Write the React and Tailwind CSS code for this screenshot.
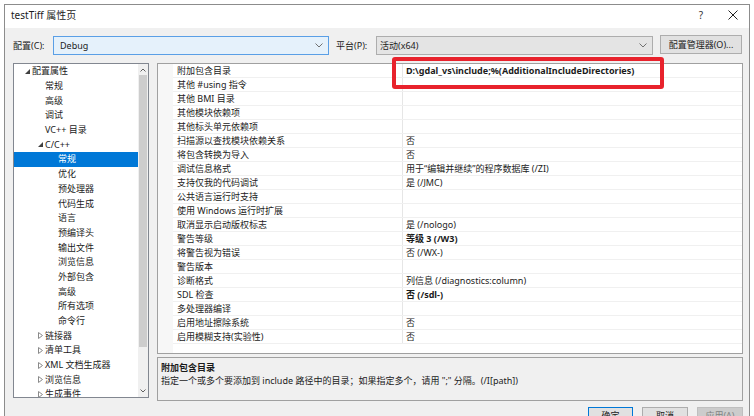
import React from "react";

const tree = [
  { t: "配置属性", l: 0, tri: "open" },
  { t: "常规", l: 1 },
  { t: "高级", l: 1 },
  { t: "调试", l: 1 },
  { t: "VC++ 目录", l: 1 },
  { t: "C/C++", l: 1, tri: "open" },
  { t: "常规", l: 2, sel: true },
  { t: "优化", l: 2 },
  { t: "预处理器", l: 2 },
  { t: "代码生成", l: 2 },
  { t: "语言", l: 2 },
  { t: "预编译头", l: 2 },
  { t: "输出文件", l: 2 },
  { t: "浏览信息", l: 2 },
  { t: "外部包含", l: 2 },
  { t: "高级", l: 2 },
  { t: "所有选项", l: 2 },
  { t: "命令行", l: 2 },
  { t: "链接器", l: 1, tri: "closed" },
  { t: "清单工具", l: 1, tri: "closed" },
  { t: "XML 文档生成器", l: 1, tri: "closed" },
  { t: "浏览信息", l: 1, tri: "closed" },
  { t: "生成事件", l: 1, tri: "closed" },
];

const props = [
  ["附加包含目录", "D:\\gdal_vs\\include;%(AdditionalIncludeDirectories)", true],
  ["其他 #using 指令", ""],
  ["其他 BMI 目录", ""],
  ["其他模块依赖项", ""],
  ["其他标头单元依赖项", ""],
  ["扫描源以查找模块依赖关系", "否"],
  ["将包含转换为导入", "否"],
  ["调试信息格式", "用于“编辑并继续”的程序数据库 (/ZI)"],
  ["支持仅我的代码调试", "是 (/JMC)"],
  ["公共语言运行时支持", ""],
  ["使用 Windows 运行时扩展", ""],
  ["取消显示启动版权标志", "是 (/nologo)"],
  ["警告等级", "等级 3 (/W3)", true],
  ["将警告视为错误", "否 (/WX-)"],
  ["警告版本", ""],
  ["诊断格式", "列信息 (/diagnostics:column)"],
  ["SDL 检查", "否 (/sdl-)", true],
  ["多处理器编译", ""],
  ["启用地址擦除系统", "否"],
  ["启用模糊支持(实验性)", "否"],
];

const padByLevel = ["pl-[8px]", "pl-[21px]", "pl-[34px]"];

function Chevron({ className = "" }) {
  return (
    <svg width="8" height="5" viewBox="0 0 8 5" className={className}>
      <path d="M0.5 0.5 L4 4 L7.5 0.5" fill="none" stroke="#707070" strokeWidth="1" />
    </svg>
  );
}

function Tri({ kind }) {
  if (kind === "open")
    return (
      <svg width="5" height="5" viewBox="0 0 5 5">
        <path d="M5 0 L5 5 L0 5 Z" fill="#404040" />
      </svg>
    );
  if (kind === "closed")
    return (
      <svg width="5" height="7" viewBox="0 0 5 7">
        <path d="M0.5 0.5 L4.5 3.5 L0.5 6.5 Z" fill="none" stroke="#8a8a8a" strokeWidth="1" />
      </svg>
    );
  return null;
}

export default function App() {
  return (
    <div className="relative w-[754px] h-[416px] overflow-hidden bg-white font-['Noto_Sans','Noto_Sans_CJK_SC',sans-serif] text-[9px] text-[#1b1b1b]">
      <div className="ml-[4px] mt-[4px] w-[746px] h-[430px] border border-[#8c8c8c] flex flex-col">
        {/* title bar */}
        <div className="h-[23px] bg-white flex items-center pl-[6px] shrink-0">
          <span className="text-[10px] leading-[12px] pb-[3px]">testTiff 属性页</span>
          <span className="ml-auto w-[12px] text-center text-[10px] leading-[12px] pb-[3px] text-[#333]">?</span>
          <span className="ml-[20px] mr-[10px] w-[12px] flex items-center justify-center pb-[3px]">
            <svg width="10" height="10" viewBox="0 0 10 10">
              <path d="M0.5 0.5 L9.5 9.5 M9.5 0.5 L0.5 9.5" stroke="#222" strokeWidth="1" />
            </svg>
          </span>
        </div>

        {/* body */}
        <div className="flex-1 bg-[#f0f0f0] flex flex-col">
          {/* config row */}
          <div className="flex items-center h-[19px] mt-[8px] pl-[8px]">
            <span className="w-[40px] leading-[12px]">配置(C):</span>
            <div className="w-[276px] h-[19px] border border-[#5a9fe6] bg-[#e5f1fb] flex items-center pl-[6px] pr-[5px]">
              <span className="leading-[12px]">Debug</span>
              <Chevron className="ml-auto" />
            </div>
            <span className="ml-[7px] w-[40px] leading-[12px]">平台(P):</span>
            <div className="w-[277px] h-[19px] border border-[#adadad] bg-[#e4e4e4] flex items-center pl-[3px] pr-[5px]">
              <span className="leading-[12px]">活动(x64)</span>
              <Chevron className="ml-auto" />
            </div>
            <div className="ml-[7px] w-[82px] h-[19px] -mt-[2px] border border-[#adadad] bg-[#e1e1e1] flex items-center justify-center">
              <span className="leading-[12px]">配置管理器(O)...</span>
            </div>
          </div>

          {/* panels */}
          <div className="flex mt-[8px] pl-[8px]">
            {/* tree */}
            <div className="w-[136px] h-[335px] border border-[#828790] bg-white flex shrink-0 overflow-hidden">
              <div className="flex-1 flex flex-col overflow-hidden">
                {tree.map((it, i) => (
                  <div
                    key={i}
                    className={
                      "h-[14.7px] shrink-0 flex items-center whitespace-nowrap " +
                      padByLevel[it.l] +
                      (it.sel ? " bg-[#0078d7] text-white" : "")
                    }
                  >
                    <span className="w-[10px] flex items-center justify-center shrink-0">
                      <Tri kind={it.tri} />
                    </span>
                    <span className="leading-[12px]">{it.t}</span>
                  </div>
                ))}
              </div>
              <div className="w-[10px] bg-[#f0f0f0] flex flex-col items-center shrink-0">
                <div className="h-[11px] flex items-center justify-center">
                  <svg width="6" height="4" viewBox="0 0 6 4">
                    <path d="M0.5 3.5 L3 1 L5.5 3.5" fill="none" stroke="#606060" strokeWidth="1" />
                  </svg>
                </div>
                <div className="w-[8px] h-[272px] bg-[#cdcdcd]" />
                <div className="mt-auto h-[12px] flex items-center justify-center">
                  <svg width="6" height="4" viewBox="0 0 6 4">
                    <path d="M0.5 0.5 L3 3 L5.5 0.5" fill="none" stroke="#606060" strokeWidth="1" />
                  </svg>
                </div>
              </div>
            </div>

            {/* right side */}
            <div className="ml-[8px] w-[586px] flex flex-col">
              <div className="h-[291px] border border-[#a0a0a0] bg-white flex">
                <div className="w-[15px] bg-[#f7f7f7] shrink-0" />
                <div className="flex-1 flex flex-col">
                  {props.map(([n, v, b], i) => (
                    <div key={i} className="h-[14px] shrink-0 flex border-b border-[#f0f0f0]">
                      <div className="w-[230px] pl-[4px] flex items-center whitespace-nowrap border-r border-[#e6e6e6]">
                        <span className="leading-[12px]">{n}</span>
                      </div>
                      <div className={"flex-1 pl-[3px] flex items-center whitespace-nowrap" + (b ? " font-bold" : "")}>
                        <span className="leading-[12px]">{v}</span>
                      </div>
                    </div>
                  ))}
                </div>
              </div>
              <div className="mt-[3px] h-[44px] border border-[#a0a0a0] bg-[#f0f0f0] pl-[3px] pt-[3px] flex flex-col">
                <span className="font-bold leading-[13px]">附加包含目录</span>
                <span className="leading-[13px]">指定一个或多个要添加到 include 路径中的目录；如果指定多个，请用 ";" 分隔。(/I[path])</span>
              </div>
            </div>
          </div>

          {/* buttons */}
          <div className="flex justify-end mt-[6px] pr-[6px] gap-[9px]">
            <div className="w-[45px] h-[18px] border border-[#0078d7] bg-[#e1e1e1] flex items-center justify-center">
              <span className="leading-[12px]">确定</span>
            </div>
            <div className="w-[46px] h-[18px] border border-[#adadad] bg-[#e1e1e1] flex items-center justify-center">
              <span className="leading-[12px]">取消</span>
            </div>
            <div className="w-[46px] h-[18px] border border-[#bfbfbf] bg-[#cccccc] text-[#838383] flex items-center justify-center">
              <span className="leading-[12px]">应用(A)</span>
            </div>
          </div>
        </div>
      </div>

      {/* red annotation box */}
      <div className="absolute left-[392px] top-[57px] w-[272px] h-[32px] border-[4px] border-[#e8222c] rounded-[3px]" />
    </div>
  );
}
